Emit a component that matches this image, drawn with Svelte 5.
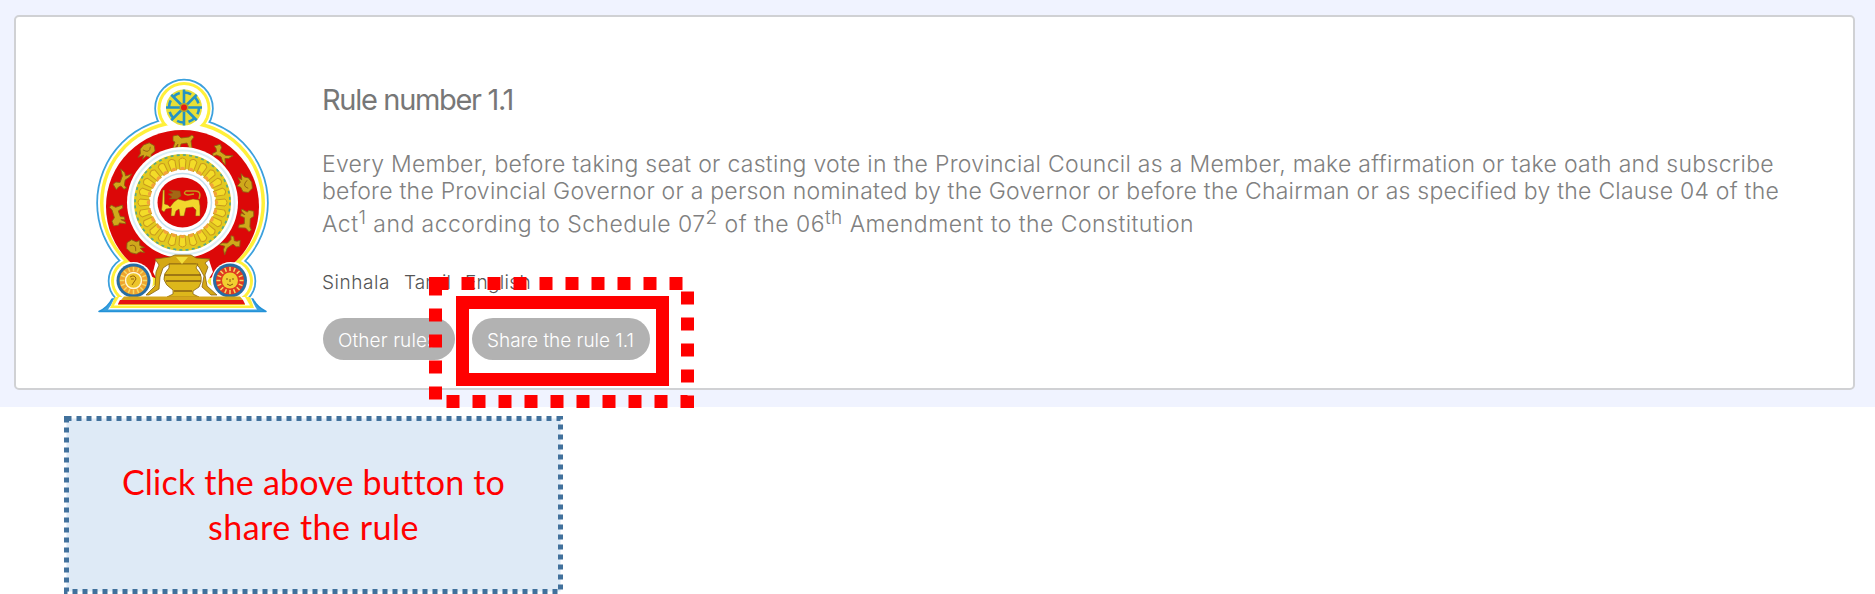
<script>
  const beads = Array.from({ length: 24 }, (_, i) => i * 15);
  const spokes = [0, 45, 90, 135];
  const rays = Array.from({ length: 16 }, (_, i) => i * 22.5);
  const animals = [
    { x: 183, y: 142, r: 0, k: 'lion' },
    { x: 222, y: 154, r: 35, k: 'horse' },
    { x: 245, y: 184, r: 75, k: 'bird' },
    { x: 246, y: 220, r: 100, k: 'lion' },
    { x: 230, y: 245, r: 145, k: 'horse' },
    { x: 135, y: 247, r: 215, k: 'bird' },
    { x: 118, y: 215, r: 260, k: 'lion' },
    { x: 122, y: 180, r: 290, k: 'horse' },
    { x: 147, y: 151, r: 330, k: 'bird' }
  ];

  // Spreads the letters of a line so that it fills its measure.
  function fit(node, width) {
    const count = node.textContent.length;
    const natural = node.getBoundingClientRect().width;
    node.style.letterSpacing = `${(width - natural) / count}px`;
  }
</script>

<main>
  <section class="band">
    <article class="card">
      <svg class="emblem" viewBox="90 75 184 242" width="184" height="242" aria-hidden="true">
        <g stroke-linejoin="round">
          <g fill="#3ba0dd" stroke="#3ba0dd" stroke-width="1.500">
            <circle cx="184" cy="108.500" r="29" /><circle cx="182.500" cy="203" r="85.500" />
            <circle cx="133.500" cy="281" r="25" /><circle cx="230.500" cy="281" r="25" />
            <path d="M112 299 Q108 307 99 311.500 H266 Q257 307 253 299Z" stroke="#2492d8" />
          </g>
          <g fill="#fff">
            <circle cx="184" cy="108.500" r="28" /><circle cx="182.500" cy="203" r="84.500" />
            <circle cx="133.500" cy="281" r="24" /><circle cx="230.500" cy="281" r="24" />
            <path d="M114 299 Q111 306 108 309.500 H257 Q254 305 251 298Z" />
          </g>
          <g fill="#fff03a">
            <circle cx="184" cy="108.500" r="26.500" /><circle cx="182.500" cy="203" r="82.500" />
            <circle cx="133.500" cy="281" r="22.500" /><circle cx="230.500" cy="281" r="22.500" />
            <path d="M115 297 L110 308 H254 L250 297Z" />
          </g>
          <g fill="#fff">
            <circle cx="184" cy="108.500" r="23.500" /><circle cx="182.500" cy="203" r="79" />
            <circle cx="133.500" cy="281" r="19.500" /><circle cx="230.500" cy="281" r="19.500" />
            <path d="M119 297 L114 305.500 H250 L245 297Z" />
          </g>
        </g>

        <circle cx="184" cy="107.500" r="18" fill="#e8df35" />
        <g stroke="#2492c4" stroke-width="2.600" fill="none">
          <circle cx="184" cy="107.500" r="15" stroke-dasharray="7 4.780" />
          {#each spokes as a}
            <path d="M184 89.500V125.500" transform={`rotate(${a} 184 107.500)`} />
          {/each}
        </g>
        <circle cx="184" cy="107.500" r="4.500" fill="#b2a52b" /><circle cx="184" cy="107.500" r="3" fill="#e81e12" />

        <circle cx="182.500" cy="206.500" r="76.500" fill="#dc0808" />
        <path d="M156 260H209L213 272 207 282 224 297H141L158 282 153 272Z" fill="#fff" />
        <circle cx="133.500" cy="281" r="19" fill="#fff" /><circle cx="230.500" cy="281" r="19" fill="#fff" />
        {#each animals as a}
          <g transform={`translate(${a.x} ${a.y}) rotate(${a.r})`} fill="#cfa91b" stroke="#8d5c12" stroke-width=".8">
            {#if a.k === 'lion'}
              <path d="M-10-6L-5-7-2-4 6-5 9-7 11-5 8-1 9 6H6L4 1-2 2-3 6H-6L-5 2-8 6H-10L-8 0-10-1Z" />
            {:else if a.k === 'horse'}
              <path d="M-11-2L-7-7-4-5-3-1 4-1 10-5 8 0 5 2 9 7 5 6 1 3-4 4-6 7-8 5-6 1-8-1Z" />
            {:else}
              <path d="M-11 1L-7-1-5-5 0-7 6-6 9-1 7 4 2 5 0 8-3 4-8 5-5 2Z" /><path d="M-3-3Q1 4 5-2" fill="none" />
            {/if}
          </g>
        {/each}

        <circle cx="182.500" cy="202.500" r="55.500" fill="#fff" />
        <circle cx="182.500" cy="202.500" r="52" fill="none" stroke="#dceff6" stroke-width="2" />
        <circle cx="182.500" cy="202.500" r="41" fill="none" stroke="#e2c91f" stroke-width="15" />
        <circle cx="182.500" cy="202.500" r="47.500" fill="none" stroke="#55a98b" stroke-width="1.600" stroke-dasharray="3 3.218" />
        {#each beads as a}
          <g transform={`rotate(${a} 182.500 202.500)`}>
            <path d="M179 160Q182.500 156 186 160L185 170H180Z" fill="#f3dc28" stroke="#c89a1d" />
            <circle cx="182.500" cy="169" r="2.300" fill="#f2a33a" />
          </g>
        {/each}
        <circle cx="182.500" cy="202.500" r="32.500" fill="#fff" />
        <circle cx="182.500" cy="202.500" r="29" fill="none" stroke="#c4e0ec" stroke-width="1.500" />
        <circle cx="182.500" cy="202.500" r="25" fill="#dc0808" />
        <g fill="#f2d82c" stroke="#8b5714" stroke-width=".5">
          <path d="M163 190H164.500V204L168 205 170 207 174 202 178 199 185 201 193 199 199 200 200 206V216H195.500L196 210 193 207 186 208 184 216H180L179 209 176 211 174.500 216H171L171.500 208 166 209 164 212 161.500 210 162 206Z" />
          <path d="M169 190L180 191 181 196 177 199 169 199 172 197 168 194 173 193Z" fill="#a36715" />
          <path d="M199 199Q202 191 195 191H186Q182 194 188 195L194 194" fill="none" stroke="#c49a1d" stroke-width="1.500" />
        </g>

        <g fill="#d5a814" stroke="#896313" stroke-width=".8">
          <path d="M155 259L170 257 175 255 191 255 196 258 210 259 205 263 208 267 205 275 207 286 217 295H211L202 287 204 276 199 267 196 264H169L163 268 160 277 159 289 149 295H146L155 286 156 272 159 265Z" />
          <path d="M169 264H198L196 268Q205 277 199 287L193 291V294L199 297H167L173 294V290Q157 280 169 268Z" fill="#ddb71b" />
          <path d="M165 275H201M166 281H201M174 291H192" fill="none" stroke-width="1.500" />
        </g>
        <path d="M176 257L182 264 188 257" fill="#f2de3b" />

        {#each [133.500, 230] as x}
          <circle cx={x} cy="280.500" r="17" fill="#276da3" /><circle cx={x} cy="280.500" r="14" fill={x < 200 ? '#efa42e' : '#df3a21'} />
          <g stroke="#f5db65" stroke-width="1.500">
            {#each rays as a}<path d={`M${x} 267V271`} transform={`rotate(${a} ${x} 280.500)`} />{/each}
          </g>
        {/each}
        <circle cx="133.500" cy="280.500" r="8" fill="#edc52b" stroke="#fff7dc" stroke-width="1.500" />
        <path d="M130 277Q135 274 136 279L132 285M131 279H134" fill="none" stroke="#92620e" />
        <circle cx="230" cy="280.500" r="8" fill="#f1cf31" />
        <path d="M226 279H228M232 279H234M230 279V282M227 284Q230 287 233 284" fill="none" stroke="#8c570e" />
        <path d="M124 296.500H240L243 300H121Z" fill="#d5a51b" /><path d="M120 300H243L245 304H118Z" fill="#e61212" />
        <path d="M118 304.500H245" stroke="#efa41d" />
      </svg>

      <div class="body">
        <h1><span use:fit={191}>Rule number 1.1</span></h1>
        <p class="rule">
          <span class="line"><span use:fit={1452}>Every Member, before taking seat or casting vote in the Provincial Council as a Member, make affirmation or take oath and subscribe</span></span>
          <span class="line"><span use:fit={1457}>before the Provincial Governor or a person nominated by the Governor or before the Chairman or as specified by the Clause 04 of the</span></span>
          <span class="line last"><span use:fit={872}>Act<sup>1</sup> and according to Schedule 07<sup>2</sup> of the 06<sup>th</sup> Amendment to the Constitution</span></span>
        </p>
        <nav><a use:fit={68}>Sinhala</a><a use:fit={47}>Tamil</a><a use:fit={66}>English</a></nav>
        <div class="buttons">
          <button class="other"><span use:fit={99}>Other rules</span></button>
          <button class="share"><span use:fit={147}>Share the rule 1.1</span></button>
        </div>
      </div>
    </article>
  </section>

  <aside>
    <svg class="frame" width="499" height="178" aria-hidden="true">
      <rect x="2.500" y="2.500" width="494" height="173" fill="#deeaf6" stroke="#41719c" stroke-width="5" stroke-dasharray="5 5" />
    </svg>
    <p><span use:fit={382}>Click the above button to</span><br /><span use:fit={211}>share the rule</span></p>
  </aside>

  <svg class="marker" width="265" height="131" aria-hidden="true">
    <g fill="none" stroke="#f00" stroke-width="13">
      <rect x="6.500" y="6.500" width="252" height="118" stroke-dasharray="13 13" />
      <rect x="33.500" y="25.500" width="200" height="77" />
    </g>
  </svg>
</main>

<style>
  :global(body) { margin: 0; background: #fff; overflow: hidden; }
  main { position: relative; width: 1875px; height: 594px; font-family: Inter, "Open Sans", sans-serif; color: #808080; }
  .band { box-sizing: border-box; height: 407px; padding: 15px 20px 17px 14px; background: #f0f3ff; }
  .card { box-sizing: border-box; height: 375px; border: 2px solid #d0d1d4; border-radius: 5px; background: #fff; display: flex; padding: 58px 0 0 74px; }
  .emblem { flex: none; margin-right: 48px; }
  .body { white-space: nowrap; }
  h1 { margin: 7px 0 0; font-size: 29px; line-height: 36px; font-weight: 400; color: #777; }
  .rule { margin: 33px 0 0; font-size: 23px; font-weight: 300; }
  .line { display: block; height: 27px; line-height: 27px; }
  .last { height: 33px; line-height: 39px; }
  sup { font-size: 19px; line-height: 0; vertical-align: 8px; }
  nav { display: flex; gap: 14px; margin-top: 33px; font-size: 19px; line-height: 24px; font-weight: 300; color: #555; }
  .buttons { display: flex; gap: 17px; margin-top: 23px; margin-left: 1px; }
  button { display: block; box-sizing: border-box; height: 42px; border: 0; border-radius: 21px; padding: 3px 0 0 15px; text-align: left; font: 300 19px Inter, sans-serif; color: #fff; background: #b2b2b2; }
  .other { width: 132px; }
  .share { width: 178px; }
  aside { position: relative; width: 499px; height: 178px; margin: 9px 0 0 64px; display: flex; justify-content: center; }
  .frame { position: absolute; left: 0; top: 0; }
  aside p { position: relative; margin: 43px 0 0; font: 400 34px/45px Lato, sans-serif; color: #f00; text-align: center; white-space: nowrap; }
  .marker { position: absolute; left: 429px; top: 277px; }
</style>
